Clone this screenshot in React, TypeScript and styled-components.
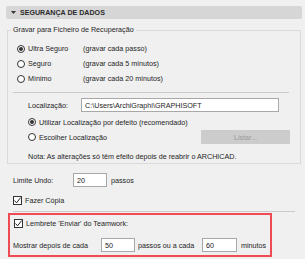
import React from "react";
import styled, { createGlobalStyle } from "styled-components";

const Global = createGlobalStyle`
  html, body { margin: 0; padding: 0; background: #f0f0f0; }
  * { box-sizing: border-box; }
`;

const Page = styled.div`
  width: 305px;
  height: 259px;
  padding: 6px 3px 0 6px;
  background: #f0f0f0;
  font-family: "Liberation Sans", Arial, sans-serif;
  font-size: 7.2px;
  color: #1e1e1e;
  overflow: hidden;
`;

const Header = styled.div`
  height: 13px;
  background: #d6d6d6;
  border-radius: 2px;
  display: flex;
  align-items: center;
  padding-left: 5px;
  gap: 4px;
`;

const Title = styled.span`
  font-weight: bold;
  font-size: 7.1px;
  color: #2a2a2a;
`;

const Group = styled.fieldset`
  margin: 6px 1px 0 1px;
  padding: 0;
  min-width: 0;
  border: 1px solid #dadada;
  height: 139px;
`;

const Legend = styled.legend`
  margin-left: 3px;
  padding: 0 2px;
  line-height: 10px;
  height: 10px;
`;

const GroupBody = styled.div`
  padding: 6px 10px 1px 0;
`;

const OptionRow = styled.div<{ $indent: number }>`
  display: flex;
  align-items: center;
  height: 15px;
  padding-left: ${(p) => p.$indent}px;
`;

const Choice = styled.div<{ $width?: number }>`
  display: flex;
  align-items: center;
  gap: 3px;
  width: ${(p) => (p.$width ? `${p.$width}px` : "auto")};
  flex: none;
`;

const RadioMark = styled.span<{ $checked?: boolean }>`
  width: 8px;
  height: 8px;
  border-radius: 50%;
  border: 1px solid #333;
  background: #fff;
  display: inline-flex;
  align-items: center;
  justify-content: center;
  flex: none;
  &::after {
    content: "";
    width: 4px;
    height: 4px;
    border-radius: 50%;
    background: ${(p) => (p.$checked ? "#333" : "transparent")};
  }
`;

const CheckBox = styled.span`
  width: 9px;
  height: 9px;
  border: 1px solid #333;
  background: #fff;
  display: inline-flex;
  align-items: center;
  justify-content: center;
  flex: none;
`;

const Divider = styled.div<{ $top: number; $left: number; $right: number }>`
  height: 1px;
  background: #cacaca;
  margin: ${(p) => `${p.$top}px ${p.$right}px 0 ${p.$left}px`};
`;

const FieldRow = styled.div<{ $top: number; $indent: number; $height?: number }>`
  display: flex;
  align-items: center;
  margin-top: ${(p) => p.$top}px;
  padding-left: ${(p) => p.$indent}px;
  height: ${(p) => p.$height ?? 14}px;
`;

const Label = styled.span<{ $width?: number; $lead?: number }>`
  width: ${(p) => (p.$width ? `${p.$width}px` : "auto")};
  padding-left: ${(p) => p.$lead ?? 0}px;
  flex: none;
  white-space: nowrap;
`;

const TextBox = styled.div<{ $width: number }>`
  width: ${(p) => p.$width}px;
  height: 14px;
  border: 1px solid #a8a8a8;
  background: #fff;
  display: flex;
  align-items: center;
  padding-left: 3px;
  flex: none;
  white-space: nowrap;
  overflow: hidden;
`;

const Button = styled.div`
  width: 89px;
  height: 14px;
  background: #cccccc;
  color: #9a9a9a;
  display: flex;
  align-items: center;
  justify-content: center;
  flex: none;
`;

const Spacer = styled.div`
  flex: 1;
`;

const Highlight = styled.div`
  margin: 1px 0 0 2px;
  width: 264px;
  height: 44px;
  border: 2px solid #f04a55;
  padding: 2px 0 0 0;
`;

const Check = () => (
  <svg width="7" height="7" viewBox="0 0 7 7">
    <path d="M0.5 3.5 L2.6 5.8 L6.6 0.6" fill="none" stroke="#222" strokeWidth="1" />
  </svg>
);

export default function App() {
  return (
    <>
      <Global />
      <Page>
        <Header>
          <svg width="5" height="3" viewBox="0 0 5 3">
            <path d="M0 0 H5 L2.5 3 Z" fill="#333" />
          </svg>
          <Title>SEGURANÇA DE DADOS</Title>
        </Header>

        <Group>
          <Legend>Gravar para Ficheiro de Recuperação</Legend>
          <GroupBody>
            <OptionRow $indent={9}>
              <Choice $width={66}>
                <RadioMark $checked />
                <span>Ultra Seguro</span>
              </Choice>
              <span>(gravar cada passo)</span>
            </OptionRow>
            <OptionRow $indent={9}>
              <Choice $width={66}>
                <RadioMark />
                <span>Seguro</span>
              </Choice>
              <span>(gravar cada 5 minutos)</span>
            </OptionRow>
            <OptionRow $indent={9}>
              <Choice $width={66}>
                <RadioMark />
                <span>Mínimo</span>
              </Choice>
              <span>(gravar cada 20 minutos)</span>
            </OptionRow>

            <Divider $top={6} $left={5} $right={1} />

            <FieldRow $top={5} $indent={20}>
              <Label $width={53}>Localização:</Label>
              <TextBox $width={198}>C:\Users\ArchiGraphi\GRAPHISOFT</TextBox>
            </FieldRow>
            <FieldRow $top={2} $indent={20} $height={16}>
              <Choice>
                <RadioMark $checked />
                <span>Utilizar Localização por defeito (recomendado)</span>
              </Choice>
            </FieldRow>
            <FieldRow $top={0} $indent={20}>
              <Choice>
                <RadioMark />
                <span>Escolher Localização</span>
              </Choice>
              <Spacer />
              <Button>Listar...</Button>
            </FieldRow>
            <FieldRow $top={6} $indent={20} $height={12}>
              <Label>Nota: As alterações só têm efeito depois de reabrir o ARCHICAD.</Label>
            </FieldRow>
          </GroupBody>
        </Group>

        <FieldRow $top={9} $indent={7}>
          <Label $width={60}>Limite Undo:</Label>
          <TextBox $width={34}>20</TextBox>
          <Label $lead={4}>passos</Label>
        </FieldRow>
        <FieldRow $top={7} $indent={7} $height={12}>
          <Choice>
            <CheckBox>
              <Check />
            </CheckBox>
            <span>Fazer Cópia</span>
          </Choice>
        </FieldRow>

        <Divider $top={5} $left={7} $right={7} />

        <Highlight>
          <FieldRow $top={0} $indent={4} $height={12}>
            <Choice>
              <CheckBox>
                <Check />
              </CheckBox>
              <span>Lembrete 'Enviar' do Teamwork:</span>
            </Choice>
          </FieldRow>
          <FieldRow $top={9} $indent={3}>
            <Label $width={88}>Mostrar depois de cada</Label>
            <TextBox $width={34}>50</TextBox>
            <Label $width={67} $lead={3}>passos ou a cada</Label>
            <TextBox $width={35}>60</TextBox>
            <Label $lead={4}>minutos</Label>
          </FieldRow>
        </Highlight>
      </Page>
    </>
  );
}
